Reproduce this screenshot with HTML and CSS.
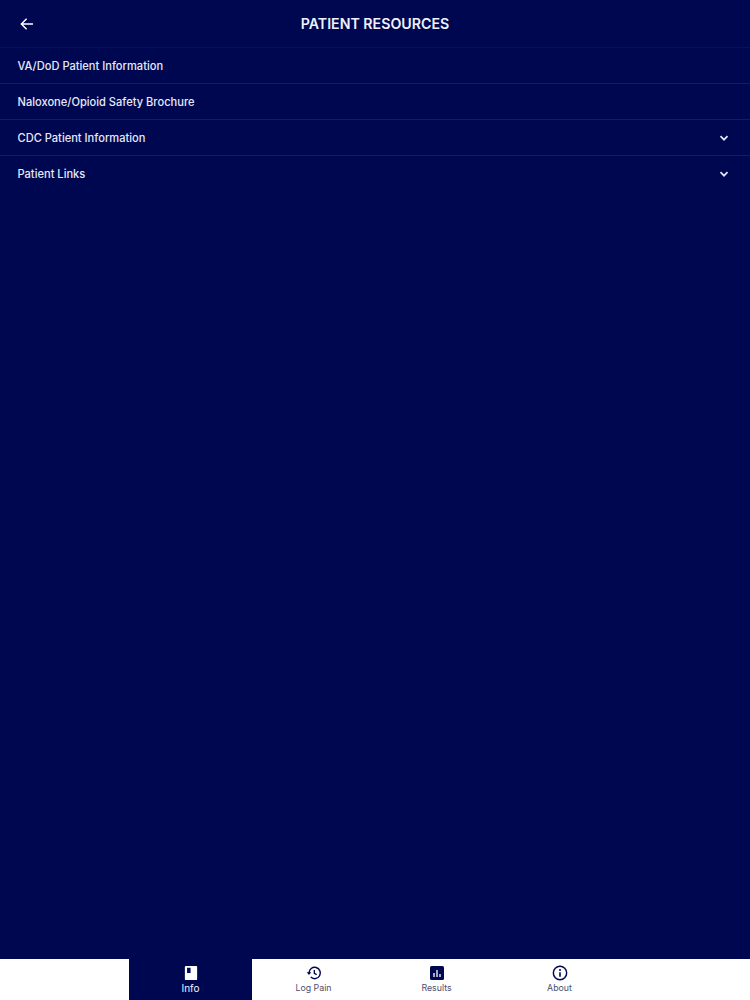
FILE: index.html
```html
<!DOCTYPE html>
<html lang="en">
<head>
    <meta charset="UTF-8">
    <meta name="viewport" content="width=device-width, initial-scale=1.0">
    <title>Patient Resources</title>
    <link rel="stylesheet" href="styles.css">
</head>
<body>
    <header class="topbar">
        <svg class="back" viewBox="0 0 24 24" width="18" height="18"><path d="M20 12H5M11.5 5L4.5 12l7 7" fill="none" stroke="#fff" stroke-width="2"/></svg>
        <h1>PATIENT RESOURCES</h1>
    </header>

    <ul class="list">
        <li>VA/DoD Patient Information</li>
        <li>Naloxone/Opioid Safety Brochure</li>
        <li>CDC Patient Information
            <svg viewBox="0 0 12 12" width="12" height="12"><path d="M2.500 4.200l3.500 3.500 3.500-3.500" fill="none" stroke="#e4e8fa" stroke-width="1.700"/></svg>
        </li>
        <li>Patient Links
            <svg viewBox="0 0 12 12" width="12" height="12"><path d="M2.500 4.200l3.500 3.500 3.500-3.500" fill="none" stroke="#e4e8fa" stroke-width="1.700"/></svg>
        </li>
    </ul>

    <nav class="tabs">
        <div class="tab active">
            <svg viewBox="0 0 16 18" width="14" height="16"><path d="M2 1h12a1 1 0 0 1 1 1v14a1 1 0 0 1-1 1H2a1 1 0 0 1-1-1V2a1 1 0 0 1 1-1z" fill="#fff"/><rect x="3.500" y="3" width="4" height="6" fill="#000751"/></svg>
            <span>Info</span>
        </div>
        <div class="tab">
            <svg viewBox="0 0 24 24" width="18" height="18"><path d="M4.500 12a8.500 8.500 0 1 1 2.600 6.100" fill="none" stroke="#000751" stroke-width="2.200"/><path d="M1 11h7l-3.500 4z" fill="#000751"/><path d="M12.500 7.500v5l3.500 2" fill="none" stroke="#000751" stroke-width="2"/></svg>
            <span>Log Pain</span>
        </div>
        <div class="tab">
            <svg viewBox="0 0 14 14" width="14" height="14"><rect width="14" height="14" rx="1.500" fill="#000751"/><path d="M4 7v4M7 4v7M10 8v3" stroke="#fff" stroke-width="1.300"/></svg>
            <span>Results</span>
        </div>
        <div class="tab">
            <svg viewBox="0 0 24 24" width="18" height="18"><circle cx="12" cy="12" r="10" fill="none" stroke="#000751" stroke-width="2.200"/><path d="M12 11v6.500" stroke="#000751" stroke-width="2.400"/><circle cx="12" cy="7.500" r="1.500" fill="#000751"/></svg>
            <span>About</span>
        </div>
    </nav>
</body>
</html>
```

FILE: styles.css
```css
* {
    box-sizing: border-box;
}

body {
    margin: 0;
    height: 1000px;
    display: flex;
    flex-direction: column;
    font-family: 'Inter', sans-serif;
    background: #000751;
    color: #e6e9f8;
    overflow: hidden;
}

.topbar {
    position: relative;
    height: 47.5px;
    display: flex;
    align-items: center;
    justify-content: center;
    border-bottom: 1px solid #0a1058;
}

.topbar h1 {
    margin: 0;
    font-size: 14.2px;
    font-weight: 600;
    color: #eef1fc;
}

.back {
    position: absolute;
    left: 18px;
    top: 15px;
}

.list {
    flex: 1;
    margin: 0;
    padding: 0;
    list-style: none;
}

.list li {
    height: 36px;
    padding: 1px 20px 0 17.5px;
    display: flex;
    align-items: center;
    justify-content: space-between;
    font-size: 11.1px;
    font-weight: 500;
    border-bottom: 1px solid #161c63;
}

.list li:last-child {
    border-bottom-color: transparent;
}

.tabs {
    height: 41.5px;
    padding-left: 129px;
    padding-right: 129px;
    display: flex;
    background: #fff;
}

.tab {
    width: 123px;
    display: flex;
    flex-direction: column;
    align-items: center;
    justify-content: flex-start;
    gap: 1px;
    padding-top: 6px;
    font-size: 8.8px;
    color: #4a4f70;
}

.tab.active {
    background: #000751;
    color: #f2f4fd;
    font-size: 10px;
}

.tab svg {
    height: 16px;
}
```
